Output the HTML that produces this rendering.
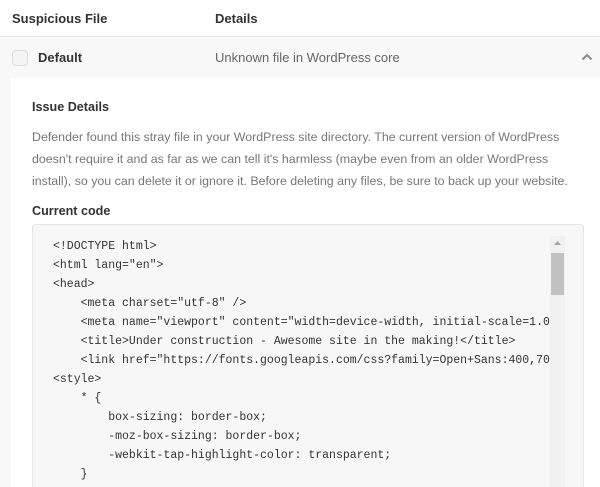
<!DOCTYPE html>
<html style="width:600px;height:487px;overflow:hidden"><head><style>
*{box-sizing:border-box;margin:0;padding:0}
body{width:600px;height:487px;overflow:hidden;background:#fff;font-family:"Liberation Sans",sans-serif;position:relative}
.hd{position:absolute;top:0;left:0;width:600px;height:37px;border-bottom:1px solid #e6e6e6;font-size:13px;font-weight:bold;color:#333}
.hd span{position:absolute;top:11px}
.row{position:absolute;top:37px;left:0;width:600px;height:450px;background:#f8f8f8;overflow:hidden}
.cb{position:absolute;left:12px;top:13px;width:16px;height:16px;border:1px solid #ddd;border-radius:4px;background:#f4f4f4}
.t{position:absolute;font-size:13px}
.panel{position:absolute;left:11px;top:41px;width:589px;height:420px;background:#fff}
.p{position:absolute;left:21px;top:48px;width:552px;font-size:12.4px;line-height:22px;color:#777}
.code{position:absolute;left:21px;top:146px;width:552px;height:300px;background:#f7f7f7;border:1px solid #e6e6e6;border-radius:4px;overflow:hidden}
pre{position:absolute;left:20px;top:12px;font-family:"Liberation Mono",monospace;font-size:11.5px;line-height:19px;color:#333;width:497px;overflow:hidden}
.sb{position:absolute;left:517px;top:11px;width:15px;height:300px;background:#f1f1f1}
.th{position:absolute;left:1px;top:17px;width:13px;height:42px;background:#c1c1c1}
</style></head><body>
<div class="hd"><span style="left:12px">Suspicious File</span><span style="left:215px">Details</span></div>
<div class="row">
<div class="cb"></div>
<div class="t" style="left:38px;top:13px;font-weight:bold;color:#333">Default</div>
<div class="t" style="left:215px;top:13px;color:#666">Unknown file in WordPress core</div>
<svg style="position:absolute;left:581px;top:16px" width="12" height="8" viewBox="0 0 12 8"><path d="M1.5 6.5 L6 2 L10.5 6.5" fill="none" stroke="#888" stroke-width="2"/></svg>
<div class="panel">
<div class="t" style="left:21px;top:22px;font-weight:bold;color:#333;font-size:12.6px">Issue Details</div>
<div class="p">Defender found this stray file in your WordPress site directory. The current version of WordPress doesn't require it and as far as we can tell it's harmless (maybe even from an older WordPress install), so you can delete it or ignore it. Before deleting any files, be sure to back up your website.</div>
<div class="t" style="left:21px;top:126px;font-weight:bold;color:#333;font-size:12.6px">Current code</div>
<div class="code">
<pre>&lt;!DOCTYPE html&gt;
&lt;html lang="en"&gt;
&lt;head&gt;
    &lt;meta charset="utf-8" /&gt;
    &lt;meta name="viewport" content="width=device-width, initial-scale=1.0" /&gt;
    &lt;title&gt;Under construction - Awesome site in the making!&lt;/title&gt;
    &lt;link href="https://fonts.googleapis.com/css?family=Open+Sans:400,700" /&gt;
&lt;style&gt;
    * {
        box-sizing: border-box;
        -moz-box-sizing: border-box;
        -webkit-tap-highlight-color: transparent;
    }
</pre>
<div class="sb"><svg style="position:absolute;left:4px;top:5px" width="7" height="4"><path d="M0 4 L3.5 0 L7 4Z" fill="#a3a3a3"/></svg><div class="th"></div></div>
</div>
</div>
</div>
</body></html>
